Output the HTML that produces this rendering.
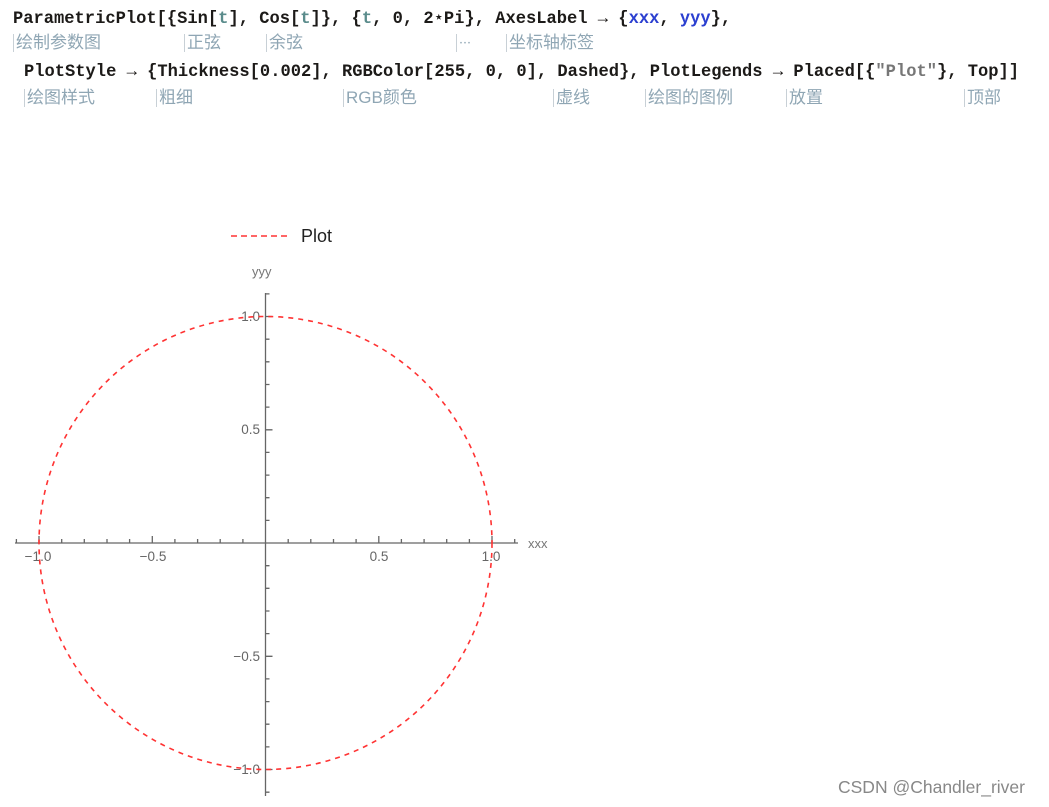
<!DOCTYPE html>
<html><head><meta charset="utf-8"><style>
body{margin:0;width:1049px;height:807px;background:#fff;position:relative;overflow:hidden}
.code{position:absolute;font-family:"Liberation Mono",monospace;font-weight:bold;font-size:17.1px;color:#1c1a18;white-space:pre;letter-spacing:0}
.t{color:#5b8c8c}.b{color:#2b3fd0}.s{color:#777}
.a{position:absolute;font-family:"Liberation Sans","Noto Sans CJK SC",sans-serif;font-size:17px;color:#8fa6b4;white-space:pre;border-left:1px solid #c8d0d6;padding-left:2px;line-height:18px}
.wm{position:absolute;left:838px;top:777px;font-family:"Liberation Sans",sans-serif;font-size:17.5px;color:#888}
</style></head><body>
<div class="code" style="left:13px;top:8px">ParametricPlot[{Sin[<span class="t">t</span>], Cos[<span class="t">t</span>]}, {<span class="t">t</span>, 0, 2⋆Pi}, AxesLabel → {<span class="b">xxx</span>, <span class="b">yyy</span>},</div>
<div class="a" style="left:13px;top:34px">绘制参数图</div>
<div class="a" style="left:184px;top:34px">正弦</div>
<div class="a" style="left:266px;top:34px">余弦</div>
<div class="a" style="left:456px;top:34px;font-size:12px">⋯</div>
<div class="a" style="left:506px;top:34px">坐标轴标签</div>
<div class="code" style="left:24px;top:63px">PlotStyle → {Thickness[0.002], RGBColor[255, 0, 0], Dashed}, PlotLegends → Placed[{<span class="s">"Plot"</span>}, Top]]</div>
<div class="a" style="left:24px;top:89px">绘图样式</div>
<div class="a" style="left:156px;top:89px">粗细</div>
<div class="a" style="left:343px;top:89px">RGB颜色</div>
<div class="a" style="left:553px;top:89px">虚线</div>
<div class="a" style="left:645px;top:89px">绘图的图例</div>
<div class="a" style="left:786px;top:89px">放置</div>
<div class="a" style="left:964px;top:89px">顶部</div>
<svg style="position:absolute;left:0;top:0" width="1049" height="807" font-family="Liberation Sans, sans-serif">
<line x1="231" y1="236" x2="287" y2="236" stroke="#f33" stroke-width="1.6" stroke-dasharray="6,4"/>
<text x="301" y="242" font-size="18" fill="#222">Plot</text>
<g stroke="#666" stroke-width="1.3" fill="none">
<line x1="15" y1="543" x2="518" y2="543"/>
<line x1="265.5" y1="293" x2="265.5" y2="796"/>
<path d="M16.4 543v-4M39 543v-7M61.7 543v-4M84.3 543v-4M107 543v-4M129.6 543v-4M152.3 543v-7M174.9 543v-4M197.6 543v-4M220.2 543v-4M242.9 543v-4M288.2 543v-4M310.8 543v-4M333.5 543v-4M356.1 543v-4M378.8 543v-7M401.4 543v-4M424.1 543v-4M446.7 543v-4M469.4 543v-4M492 543v-7M514.7 543v-4"/>
<path d="M265.5 520.4h4M265.5 497.7h4M265.5 475.1h4M265.5 452.4h4M265.5 429.8h7M265.5 407.1h4M265.5 384.5h4M265.5 361.8h4M265.5 339.2h4M265.5 316.5h7M265.5 293.9h4M265.5 565.7h4M265.5 588.3h4M265.5 611h4M265.5 633.6h4M265.5 656.3h7M265.5 678.9h4M265.5 701.6h4M265.5 724.2h4M265.5 746.9h4M265.5 769.5h7M265.5 792.2h4"/>
</g>
<g font-size="13.5" fill="#666" text-anchor="middle">
<text x="38" y="561">−1.0</text><text x="153" y="561">−0.5</text><text x="379" y="561">0.5</text><text x="491" y="561">1.0</text>
</g>
<g font-size="13.5" fill="#666" text-anchor="end">
<text x="260" y="321">1.0</text><text x="260" y="434">0.5</text><text x="260" y="661">−0.5</text><text x="260" y="774">−1.0</text>
</g>
<text x="528" y="548" font-size="13" fill="#777">xxx</text>
<text x="252" y="276" font-size="13" fill="#777">yyy</text>
<circle cx="265.5" cy="543" r="226.5" fill="none" stroke="#f33" stroke-width="1.6" stroke-dasharray="5,5"/>
</svg>
<div class="wm">CSDN @Chandler_river</div>
</body></html>
